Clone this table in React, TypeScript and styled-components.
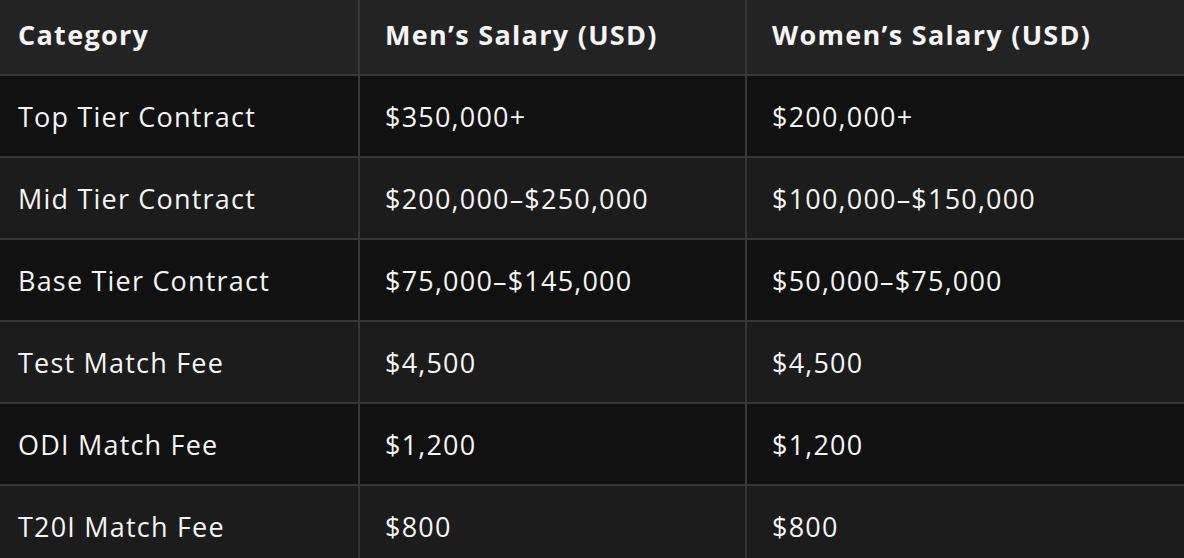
import styled, { createGlobalStyle } from 'styled-components';

const GlobalStyle = createGlobalStyle`
  html, body {
    margin: 0;
    padding: 0;
    background: #111111;
  }
  body {
    font-family: 'Open Sans', 'Liberation Sans', sans-serif;
    color: #f5f5f5;
  }
`;

const Table = styled.table`
  width: 1184px;
  border-collapse: collapse;
  table-layout: fixed;
`;

const HeadRow = styled.tr`
  background: #232323;
  height: 75px;
`;

const Row = styled.tr<{ $alt: boolean }>`
  background: ${(p) => (p.$alt ? '#1c1c1c' : '#111111')};
  height: 82px;
`;

const Th = styled.th<{ $first?: boolean }>`
  text-align: left;
  font-size: 27px;
  font-weight: 700;
  letter-spacing: 1.3px;
  padding: 0 0 5px ${(p) => (p.$first ? '18px' : '25px')};
  border-bottom: 2px solid #383838;
  border-left: ${(p) => (p.$first ? 'none' : '2px solid #363636')};
  white-space: nowrap;
`;

const Td = styled.td<{ $first?: boolean }>`
  font-size: 27px;
  font-weight: 400;
  letter-spacing: 1.2px;
  padding: 0 0 0 ${(p) => (p.$first ? '18px' : '25px')};
  border-bottom: 2px solid #363636;
  border-left: ${(p) => (p.$first ? 'none' : '2px solid #363636')};
  white-space: nowrap;
`;

const rows = [
  { category: 'Top Tier Contract', men: '$350,000+', women: '$200,000+' },
  { category: 'Mid Tier Contract', men: '$200,000–$250,000', women: '$100,000–$150,000' },
  { category: 'Base Tier Contract', men: '$75,000–$145,000', women: '$50,000–$75,000' },
  { category: 'Test Match Fee', men: '$4,500', women: '$4,500' },
  { category: 'ODI Match Fee', men: '$1,200', women: '$1,200' },
  { category: 'T20I Match Fee', men: '$800', women: '$800' },
];

const App: React.FC = () => {
  return (
    <>
      <GlobalStyle />
      <Table>
        <colgroup>
          <col style={{ width: 359 }} />
          <col style={{ width: 387 }} />
          <col style={{ width: 438 }} />
        </colgroup>
        <thead>
          <HeadRow>
            <Th $first>Category</Th>
            <Th>Men’s Salary (USD)</Th>
            <Th>Women’s Salary (USD)</Th>
          </HeadRow>
        </thead>
        <tbody>
          {rows.map((row, i) => (
            <Row key={row.category} $alt={i % 2 === 1}>
              <Td $first>{row.category}</Td>
              <Td>{row.men}</Td>
              <Td>{row.women}</Td>
            </Row>
          ))}
        </tbody>
      </Table>
    </>
  );
};

export default App;
